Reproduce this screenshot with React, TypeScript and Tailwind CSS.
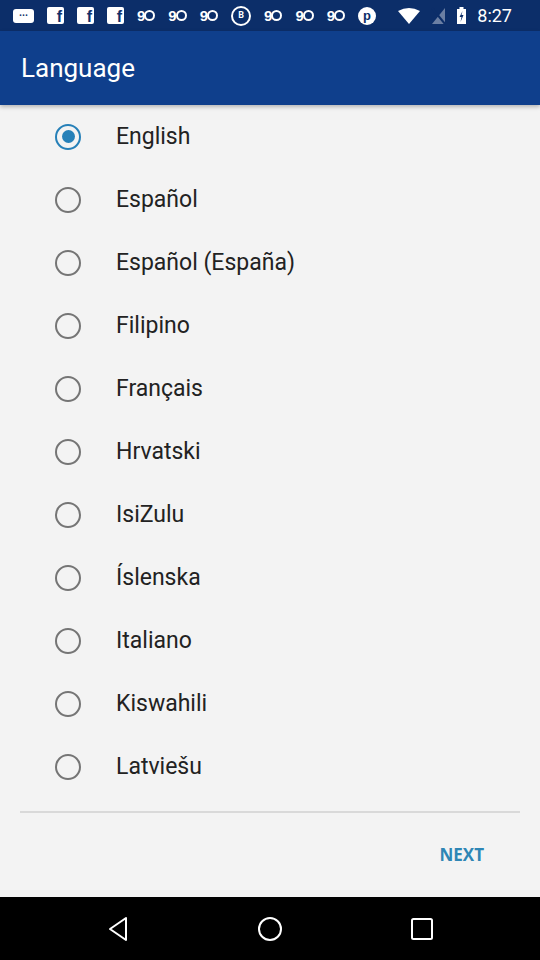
import React, { useState } from 'react';

const languages = [
  'English',
  'Español',
  'Español (España)',
  'Filipino',
  'Français',
  'Hrvatski',
  'IsiZulu',
  'Íslenska',
  'Italiano',
  'Kiswahili',
  'Latviešu',
];

function FbIcon() {
  return (
    <div className="w-[17px] h-[17px] bg-white rounded-[2px] flex items-end justify-end overflow-hidden">
      <span className="text-[#0d2f6b] font-bold text-[16px] leading-[15px] mr-[2px] font-['Liberation_Sans',sans-serif]">f</span>
    </div>
  );
}

function NineIcon() {
  return (
    <div className="flex items-center text-white font-bold text-[15px] leading-none font-['Liberation_Sans',sans-serif]">
      <span>9</span>
      <span className="w-[11px] h-[11px] rounded-full border-2 border-white -ml-[1px]" />
    </div>
  );
}

function StatusBar() {
  return (
    <div className="h-[31px] bg-[#0c2e69] flex items-center pl-[13px] pr-[28px] text-white">
      <div className="flex items-center gap-[13px]">
        <div className="w-[21px] h-[14px] bg-white rounded-[3px] flex items-center justify-center text-[#0c2e69] text-[10px] leading-none font-bold">···</div>
        <FbIcon />
        <FbIcon />
        <FbIcon />
        <NineIcon />
        <NineIcon />
        <NineIcon />
        <div className="w-[20px] h-[20px] rounded-full border-2 border-white flex items-center justify-center text-[9px] font-bold">B</div>
        <NineIcon />
        <NineIcon />
        <NineIcon />
        <div className="w-[18px] h-[18px] rounded-full bg-white flex items-center justify-center text-[#0c2e69] text-[13px] font-bold leading-none font-['Liberation_Sans',sans-serif]">p</div>
      </div>
      <div className="ml-auto flex items-center gap-[11px]">
        <svg width="22" height="16" viewBox="0 0 22 16">
          <path d="M0 3 Q11 -3 22 3 L11 16 Z" fill="white" />
        </svg>
        <svg width="15" height="18" viewBox="0 0 15 18">
          <path d="M1 17 L14 17 L14 1 Z" fill="#6b7fa3" />
          <path d="M1 1 L14 17" stroke="#0c2e69" strokeWidth="2" />
        </svg>
        <svg width="9" height="17" viewBox="0 0 9 17">
          <rect x="2.5" y="0" width="4" height="2" fill="white" />
          <rect x="0" y="2" width="9" height="15" fill="white" />
          <path d="M5.5 4 L2.5 10 L4.5 10 L3.5 15 L6.5 8 L4.5 8 Z" fill="#0c2e69" />
        </svg>
        <span className="text-[18px] leading-none font-['Roboto',sans-serif]">8:27</span>
      </div>
    </div>
  );
}

function Radio({ checked }: { checked: boolean }) {
  return (
    <div
      className={`w-[26px] h-[26px] rounded-full border-[2.5px] flex items-center justify-center ${
        checked ? 'border-[#2680b8]' : 'border-[#757575]'
      }`}
    >
      {checked && <div className="w-[13px] h-[13px] rounded-full bg-[#2680b8]" />}
    </div>
  );
}

export default function App() {
  const [selected, setSelected] = useState('English');

  return (
    <div className="w-[540px] h-[960px] bg-[#f3f3f3] flex flex-col font-['Roboto',sans-serif] overflow-hidden">
      <StatusBar />
      <div className="h-[74px] bg-[#0f3f8c] flex items-center pl-[21px] shadow-[0_2px_4px_rgba(0,0,0,0.25)] relative z-10">
        <h1 className="text-white text-[26px] leading-none">Language</h1>
      </div>

      <div className="flex flex-col">
        {languages.map(lang => (
          <button
            key={lang}
            onClick={() => setSelected(lang)}
            className="h-[63px] flex items-center pl-[55px] text-left"
          >
            <Radio checked={selected === lang} />
            <span className="ml-[35px] text-[23px] leading-none text-[#222222]">{lang}</span>
          </button>
        ))}
      </div>

      <div className="mx-[20px] mt-[13px] h-[2px] bg-[#d9d9d9]" />

      <div className="flex-1 flex items-center justify-end pr-[56px]">
        <span className="text-[#2e86b5] text-[17px] font-bold font-['Open_Sans',sans-serif]">NEXT</span>
      </div>

      <div className="h-[63px] bg-black flex items-center justify-center">
        <div className="w-[152px] flex justify-center">
          <svg width="24" height="26" viewBox="0 0 24 26">
            <path d="M20 2 L4 13 L20 24 Z" fill="none" stroke="white" strokeWidth="2" strokeLinejoin="round" />
          </svg>
        </div>
        <div className="w-[152px] flex justify-center">
          <svg width="26" height="26" viewBox="0 0 26 26">
            <circle cx="13" cy="13" r="11" fill="none" stroke="white" strokeWidth="2" />
          </svg>
        </div>
        <div className="w-[152px] flex justify-center">
          <svg width="24" height="24" viewBox="0 0 24 24">
            <rect x="2" y="2" width="20" height="20" rx="1.5" fill="none" stroke="white" strokeWidth="2" />
          </svg>
        </div>
      </div>
    </div>
  );
}
